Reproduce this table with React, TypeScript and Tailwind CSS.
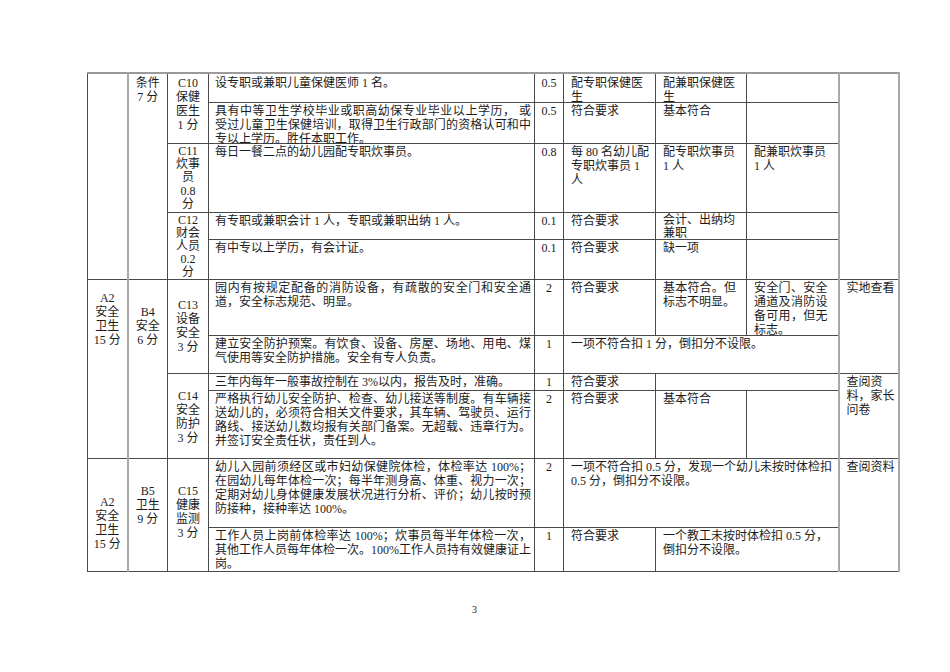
import React from 'react';

const font = "font-['Liberation_Serif','Noto_Sans_CJK_SC',serif]";

// one block per printed line; j = stretch every line but the last (Word's justify)
function Lines({ t, j }: { t: string; j?: boolean }) {
  const lines = t.split('\n');
  return (
    <>
      {lines.map((s, i) => (
        <div
          key={i}
          className={j && i < lines.length - 1 ? '[text-align-last:justify]' : 'whitespace-nowrap'}
        >
          {s}
        </div>
      ))}
    </>
  );
}

type CellProps = {
  className?: string;
  rowSpan?: number;
  colSpan?: number;
  children?: React.ReactNode;
};

// rows carry their own heights, so cell content never pushes a row taller
function Cell({ className = '', rowSpan, colSpan, children }: CellProps) {
  return (
    <td rowSpan={rowSpan} colSpan={colSpan} className={`border border-[#4a4a4a] p-0 align-top ${className}`}>
      <div className="h-0 overflow-visible">{children}</div>
    </td>
  );
}

const txt = 'pl-[6px] pr-[3px] pt-[1px]';
const lv = 'pl-[7px] pr-[10px] pt-[1px]';
const num = 'text-center pt-[1px]';
const mid = 'text-center';
const aCol = 'border-r-2 border-r-[#a8a8a8]';
const mCol = 'border-l-2 border-l-[#a8a8a8] border-r-2 border-r-[#a8a8a8] pl-[7px] pr-[2px] pt-[1px]';

export default function App() {
  return (
    <div className={`h-[672px] w-[950px] bg-white text-[12px] leading-[14px] text-[#1c1c1c] ${font}`}>
      <div className="pl-[87px] pt-[72px]">
        <table className="w-[811px] table-fixed border-collapse border-t-2 border-t-[#9a9a9a]">
          <colgroup>
            <col className="w-[40px]" />
            <col className="w-[40px]" />
            <col className="w-[41px]" />
            <col className="w-[326px]" />
            <col className="w-[29px]" />
            <col className="w-[92px]" />
            <col className="w-[91px]" />
            <col className="w-[92px]" />
            <col className="w-[60px]" />
          </colgroup>
          <tbody>
            {/* C10 */}
            <tr className="h-[29px]">
              <Cell rowSpan={5} className={aCol} />
              <Cell rowSpan={5} className={`${mid} pt-[2px]`}>
                <Lines t={'条件\n7 分'} />
              </Cell>
              <Cell rowSpan={2} className={`${mid} pt-[2px]`}>
                <Lines t={'C10\n保健\n医生\n1 分'} />
              </Cell>
              <Cell className={`${txt} !pt-[2px]`}>
                <Lines t="设专职或兼职儿童保健医师 1 名。" />
              </Cell>
              <Cell className={`${num} !pt-[2px]`}>0.5</Cell>
              <Cell className={`${lv} !pt-[2px]`}>
                <Lines t={'配专职保健医\n生'} />
              </Cell>
              <Cell className={`${lv} !pt-[2px]`}>
                <Lines t={'配兼职保健医\n生'} />
              </Cell>
              <Cell />
              <Cell rowSpan={5} className={mCol} />
            </tr>
            <tr className="h-[41px]">
              <Cell className={txt}>
                <Lines t={'具有中等卫生学校毕业或职高幼保专业毕业以上学历， 或\n受过儿童卫生保健培训，取得卫生行政部门的资格认可和中\n专以上学历。胜任本职工作。'} j />
              </Cell>
              <Cell className={num}>0.5</Cell>
              <Cell className={lv}>符合要求</Cell>
              <Cell className={lv}>基本符合</Cell>
              <Cell />
            </tr>
            {/* C11 */}
            <tr className="h-[69px]">
              <Cell className={`${mid} pt-[1px] leading-[13.4px]`}>
                <Lines t={'C11\n炊事\n员\n0.8\n分'} />
              </Cell>
              <Cell className={txt}>
                <Lines t="每日一餐二点的幼儿园配专职炊事员。" />
              </Cell>
              <Cell className={num}>0.8</Cell>
              <Cell className={lv}>
                <Lines t={'每 80 名幼儿配\n专职炊事员 1\n人'} />
              </Cell>
              <Cell className={lv}>
                <Lines t={'配专职炊事员\n1 人'} />
              </Cell>
              <Cell className={lv}>
                <Lines t={'配兼职炊事员\n1 人'} />
              </Cell>
            </tr>
            {/* C12 */}
            <tr className="h-[27px]">
              <Cell rowSpan={2} className={`${mid} pt-[1px] leading-[13px]`}>
                <Lines t={'C12\n财会\n人员\n0.2\n分'} />
              </Cell>
              <Cell className={txt}>
                <Lines t="有专职或兼职会计 1 人，专职或兼职出纳 1 人。" />
              </Cell>
              <Cell className={num}>0.1</Cell>
              <Cell className={lv}>符合要求</Cell>
              <Cell className={`${lv} leading-[13px]`}>
                <Lines t={'会计、出纳均\n兼职'} />
              </Cell>
              <Cell />
            </tr>
            <tr className="h-[40px]">
              <Cell className={txt}>
                <Lines t="有中专以上学历，有会计证。" />
              </Cell>
              <Cell className={num}>0.1</Cell>
              <Cell className={lv}>符合要求</Cell>
              <Cell className={lv}>缺一项</Cell>
              <Cell />
            </tr>
            {/* C13 */}
            <tr className="h-[56px]">
              <Cell rowSpan={4} className={`${aCol} ${mid} pt-[11px]`}>
                <Lines t={'A2\n安全\n卫生\n15 分'} />
              </Cell>
              <Cell rowSpan={4} className={`${mid} pt-[25px]`}>
                <Lines t={'B4\n安全\n6 分'} />
              </Cell>
              <Cell rowSpan={2} className={`${mid} pt-[18px]`}>
                <Lines t={'C13\n设备\n安全\n3 分'} />
              </Cell>
              <Cell className={txt}>
                <Lines t={'园内有按规定配备的消防设备，有疏散的安全门和安全通\n道，安全标志规范、明显。'} j />
              </Cell>
              <Cell className={num}>2</Cell>
              <Cell className={lv}>符合要求</Cell>
              <Cell className={lv}>
                <Lines t={'基本符合。但\n标志不明显。'} j />
              </Cell>
              <Cell className={lv}>
                <Lines t={'安全门、安全\n通道及消防设\n备可用，但无\n标志。'} j />
              </Cell>
              <Cell rowSpan={2} className={mCol}>
                <Lines t="实地查看" />
              </Cell>
            </tr>
            <tr className="h-[38px]">
              <Cell className={txt}>
                <Lines t={'建立安全防护预案。有饮食、设备、房屋、场地、用电、煤\n气使用等安全防护措施。安全有专人负责。'} j />
              </Cell>
              <Cell className={num}>1</Cell>
              <Cell colSpan={3} className={lv}>
                <Lines t="一项不符合扣 1 分，倒扣分不设限。" />
              </Cell>
            </tr>
            {/* C14 */}
            <tr className="h-[17px]">
              <Cell rowSpan={2} className={`${mid} pt-[15px]`}>
                <Lines t={'C14\n安全\n防护\n3 分'} />
              </Cell>
              <Cell className={txt}>
                <Lines t="三年内每年一般事故控制在 3%以内，报告及时，准确。" />
              </Cell>
              <Cell className={num}>1</Cell>
              <Cell className={lv}>符合要求</Cell>
              <Cell colSpan={2} />
              <Cell rowSpan={2} className={mCol}>
                <Lines t={'查阅资\n料，家长\n问卷'} />
              </Cell>
            </tr>
            <tr className="h-[68px]">
              <Cell className={txt}>
                <Lines
                  t={'严格执行幼儿安全防护、检查、幼儿接送等制度。有车辆接\n送幼儿的，必须符合相关文件要求，其车辆、驾驶员、运行\n路线、接送幼儿数均报有关部门备案。无超载、违章行为。\n并签订安全责任状，责任到人。'}
                  j
                />
              </Cell>
              <Cell className={num}>2</Cell>
              <Cell className={lv}>符合要求</Cell>
              <Cell className={lv}>基本符合</Cell>
              <Cell />
            </tr>
            {/* C15 */}
            <tr className="h-[69px]">
              <Cell rowSpan={2} className={`${aCol} ${mid} pt-[36px]`}>
                <Lines t={'A2\n安全\n卫生\n15 分'} />
              </Cell>
              <Cell rowSpan={2} className={`${mid} pt-[25px]`}>
                <Lines t={'B5\n卫生\n9 分'} />
              </Cell>
              <Cell rowSpan={2} className={`${mid} pt-[25px]`}>
                <Lines t={'C15\n健康\n监测\n3 分'} />
              </Cell>
              <Cell className={txt}>
                <Lines
                  t={'幼儿入园前须经区或市妇幼保健院体检，体检率达 100%；\n在园幼儿每年体检一次；每半年测身高、体重、视力一次；\n定期对幼儿身体健康发展状况进行分析、评价；幼儿按时预\n防接种，接种率达 100%。'}
                  j
                />
              </Cell>
              <Cell className={num}>2</Cell>
              <Cell colSpan={3} className={lv}>
                <Lines t={'一项不符合扣 0.5 分，发现一个幼儿未按时体检扣\n0.5 分，倒扣分不设限。'} />
              </Cell>
              <Cell rowSpan={2} className={mCol}>
                <Lines t="查阅资料" />
              </Cell>
            </tr>
            <tr className="h-[44px]">
              <Cell className={txt}>
                <Lines
                  t={'工作人员上岗前体检率达 100%；炊事员每半年体检一次，\n其他工作人员每年体检一次。100%工作人员持有效健康证上\n岗。'}
                  j
                />
              </Cell>
              <Cell className={num}>1</Cell>
              <Cell className={lv}>符合要求</Cell>
              <Cell colSpan={2} className={lv}>
                <Lines t={'一个教工未按时体检扣 0.5 分，\n倒扣分不设限。'} />
              </Cell>
            </tr>
          </tbody>
        </table>
      </div>
      <div className="mt-[33px] pl-[472px] text-[10px] leading-[10px]">3</div>
    </div>
  );
}
